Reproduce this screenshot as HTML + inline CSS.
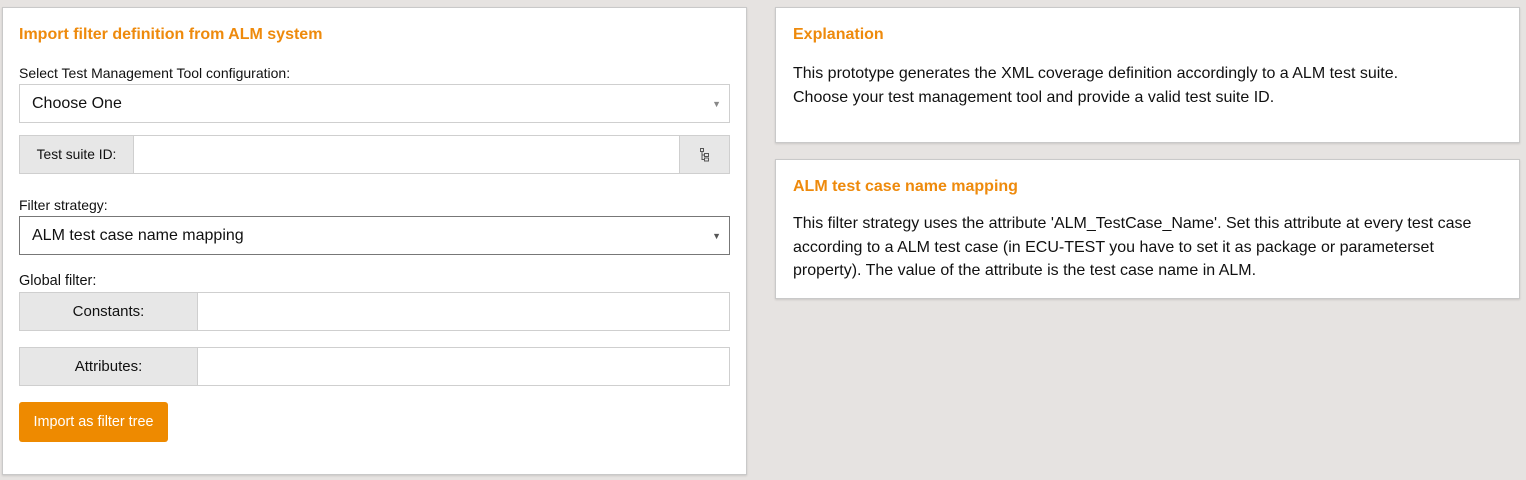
<!DOCTYPE html>
<html><head><meta charset="utf-8"><style>
*{box-sizing:border-box;margin:0;padding:0}
body{width:1526px;height:480px;background:#e6e3e1;font-family:"Liberation Sans",Arial,sans-serif;color:#111;position:relative;overflow:hidden}
.p{position:absolute;background:#fff;border:1px solid #c9c9c9;box-shadow:0 1px 2px rgba(0,0,0,.12)}
.a{position:absolute}
h3{position:absolute;color:#ee8a0c;font-size:16px;font-weight:bold}
.lbl{position:absolute;font-size:14px}
.box{position:absolute;border:1px solid #cfcfcf;background:#fff}
.sel{font-size:16px;padding-left:12px;display:flex;align-items:center}
.arr{position:absolute;right:8px;top:50%;transform:translateY(-50%);font-size:9px;color:#888}
.add{position:absolute;top:0;bottom:0;background:#e7e7e7;display:flex;align-items:center;justify-content:center}
.txt{position:absolute;font-size:16px;line-height:24px}
</style></head><body>
<div class="p" style="left:2px;top:7px;width:745px;height:468px">
<h3 style="left:16px;top:18px">Import filter definition from ALM system</h3>
<div class="lbl" style="left:16px;top:57px">Select Test Management Tool configuration:</div>
<div class="box sel" style="left:16px;top:76px;width:711px;height:39px">Choose One<span class="arr">▼</span></div>
<div class="box" style="left:16px;top:127px;width:711px;height:39px">
 <div class="add" style="left:0;width:114px;border-right:1px solid #cfcfcf;font-size:13.8px">Test suite ID:</div>
 <div class="add" style="right:0;width:50px;border-left:1px solid #cfcfcf">
 <svg width="12" height="14" viewBox="0 0 12 14" fill="none" stroke="#555" stroke-width="1"><rect x="1.5" y="0.5" width="3" height="3"/><rect x="5.5" y="5.5" width="4" height="3"/><rect x="5.5" y="10" width="4" height="3"/><path d="M3 3.5V11.5H5.5M3 7H5.5"/></svg></div>
</div>
<div class="lbl" style="left:16px;top:189px">Filter strategy:</div>
<div class="box sel" style="left:16px;top:208px;width:711px;height:39px;border-color:#777">ALM test case name mapping<span class="arr" style="color:#555">▼</span></div>
<div class="lbl" style="left:16px;top:265px;font-size:14.5px">Global filter:</div>
<div class="box" style="left:16px;top:284px;width:711px;height:39px">
 <div class="add" style="left:0;width:178px;border-right:1px solid #cfcfcf;font-size:15px">Constants:</div></div>
<div class="box" style="left:16px;top:339px;width:711px;height:39px">
 <div class="add" style="left:0;width:178px;border-right:1px solid #cfcfcf;font-size:15px">Attributes:</div></div>
<div class="a" style="left:16px;top:394px;width:149px;height:40px;background:#ee8a00;border-radius:3px;color:#fff;font-size:14.4px;display:flex;align-items:center;justify-content:center">Import as filter tree</div>
</div>
<div class="p" style="left:775px;top:7px;width:745px;height:136px">
<h3 style="left:17px;top:18px">Explanation</h3>
<div class="txt" style="left:17px;top:54px">This prototype generates the XML coverage definition accordingly to a ALM test suite.<br>Choose your test management tool and provide a valid test suite ID.</div>
</div>
<div class="p" style="left:775px;top:159px;width:745px;height:140px">
<h3 style="left:17px;top:18px">ALM test case name mapping</h3>
<div class="txt" style="left:17px;top:52px;line-height:23.5px">This filter strategy uses the attribute 'ALM_TestCase_Name'. Set this attribute at every test case<br>according to a ALM test case (in ECU-TEST you have to set it as package or parameterset<br>property). The value of the attribute is the test case name in ALM.</div>
</div>
</body></html>
